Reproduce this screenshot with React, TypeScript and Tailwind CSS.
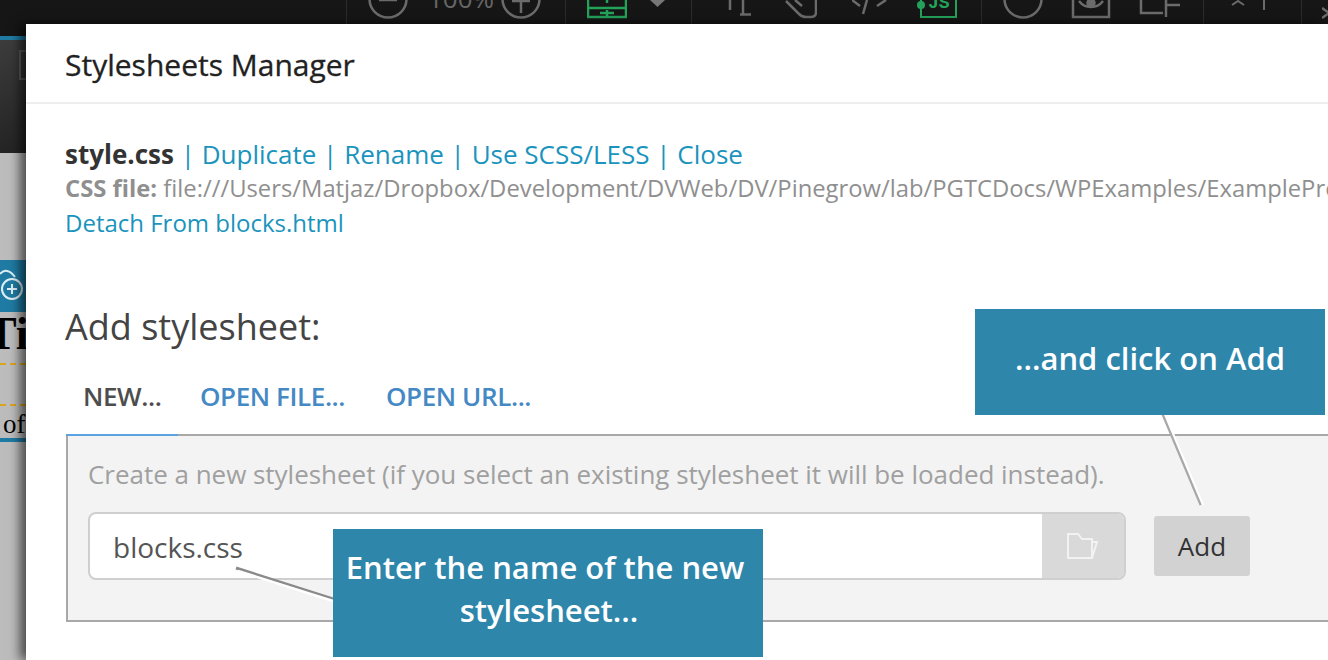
const font = { fontFamily: '"Open Sans", sans-serif' };
const serif = { fontFamily: '"Liberation Serif", serif' };

function ToolIcon({ w, color = '#6b6b6b', className = '', children }: { w: number; color?: string; className?: string; children: React.ReactNode }) {
  return (
    <svg width={w} height={24} viewBox={`0 0 ${w} 24`} fill="none" stroke={color} strokeWidth={2.5} className={`shrink-0 ${className}`}>
      {children}
    </svg>
  );
}

function Toolbar() {
  return (
    <div className="flex h-[24px] shrink-0 overflow-hidden bg-[#161616] pl-[346px]">
      <div className="flex w-[219px] shrink-0 border-l border-[#2c2c2c] pl-[21px]">
        <ToolIcon w={40}>
          <circle cx="20" cy="-1" r="18.5" />
          <path d="M11 0h18" />
        </ToolIcon>
        <span className="ml-[20px] mt-[-19px] w-[64px] shrink-0 text-[26px] leading-[34px] text-[#666666]" style={font}>
          100%
        </span>
        <ToolIcon w={40} className="ml-[9px]">
          <circle cx="20" cy="-1" r="18.5" />
          <path d="M20 -8v21M11 1h18" />
        </ToolIcon>
      </div>
      <div className="flex w-[126px] shrink-0 border-l border-[#2c2c2c] pl-[21px]">
        <ToolIcon w={40} color="#23a35a">
          <path d="M1 0v17h38V0M1 8h38M20 0v3M13 13h14M20 10v6" />
        </ToolIcon>
        <svg width="15" height="24" viewBox="0 0 15 24" className="ml-[23px] shrink-0">
          <path d="M0 0h15l-7.5 7z" fill="#777777" />
        </svg>
      </div>
      <div className="flex w-[290px] shrink-0 border-l border-[#2c2c2c] pl-[35px]">
        <ToolIcon w={26}>
          <path d="M3 0v10M16 0v14M13 14.5h11" />
        </ToolIcon>
        <ToolIcon w={32} className="ml-[32px]">
          <path d="M1 1l13 13q3 3 7 3h5q5 0 5-5V0M10 0l7 6" />
        </ToolIcon>
        <ToolIcon w={36} className="ml-[35px]">
          <path d="M0 0l8 6M11 14l4-14M25 6l9-6" />
        </ToolIcon>
        <div className="relative ml-[32px] h-[18px] w-[37px] shrink-0 border-x-[2.5px] border-b-[2.5px] border-[#23a35a]">
          <span className="absolute left-[-5px] top-[1px] h-[8px] w-[8px] rounded-full bg-[#23a35a]" />
          <span className="absolute left-[6px] top-[-7px] text-[18px] leading-[20px] font-bold text-[#23a35a]" style={{ fontFamily: '"Liberation Mono", monospace' }}>
            JS
          </span>
        </div>
      </div>
      <div className="flex w-[222px] shrink-0 border-l border-[#2c2c2c] pl-[21px]">
        <ToolIcon w={40}>
          <circle cx="20" cy="-1" r="18.5" />
        </ToolIcon>
        <ToolIcon w={40} className="ml-[28px]">
          <path d="M2 0v17h36V0" />
          <path d="M8 1c6 8 18 8 24 0" />
          <circle cx="20" cy="3" r="3.5" fill="#6b6b6b" />
        </ToolIcon>
        <ToolIcon w={42} className="ml-[28px]">
          <path d="M2 0v13h22M27 0v17M28 5h13" />
        </ToolIcon>
      </div>
      <div className="flex w-[98px] shrink-0 border-l border-[#2c2c2c] pl-[27px]">
        <ToolIcon w={15}>
          <path d="M1 5l6-4 6 4" strokeWidth={2} />
        </ToolIcon>
        <ToolIcon w={4} className="ml-[16px]">
          <path d="M2 0v10" strokeWidth={2} />
        </ToolIcon>
      </div>
      <div className="flex w-[27px] shrink-0 border-l border-[#2c2c2c] pl-[20px]">
        <ToolIcon w={8}>
          <path d="M0 8l7 5M0 18l7-5" />
        </ToolIcon>
      </div>
    </div>
  );
}

function LeftStrip() {
  return (
    <div className="flex w-[26px] shrink-0 flex-col overflow-hidden bg-[#bcbcbc]">
      <div className="h-[12px] shrink-0 bg-[#161616]" />
      <div className="h-[4px] shrink-0 bg-[#1f7ba3]" />
      <div className="flex h-[113px] shrink-0 bg-gradient-to-b from-[#3c3c3c] to-[#242424] pl-[19px] pt-[10px]">
        <div className="h-[30px] w-[7px] border-y-2 border-l-2 border-[#5a5a5a]" />
      </div>
      <div className="h-[107px] shrink-0" />
      <div className="flex h-[52px] shrink-0 items-center bg-[#1f7ba3]">
        <svg width="26" height="52" viewBox="0 0 26 52" fill="none" stroke="#dfeef5" strokeWidth="2">
          <path d="M0 14c4-5 10-4 15 3" />
          <circle cx="12" cy="29" r="10" />
          <path d="M7 29h10M12 24v10" />
        </svg>
      </div>
      <div className="h-[51px] shrink-0 overflow-hidden">
        <p className="ml-[-14px] mt-[-6px] text-[46px] leading-[56px] font-bold text-black" style={serif}>
          Ti
        </p>
      </div>
      <div className="h-[41px] shrink-0 border-t-2 border-dashed border-[#d9a520]" />
      <div className="h-[34px] shrink-0 overflow-hidden border-t-2 border-dashed border-[#d9a520]">
        <p className="ml-[3px] mt-[3px] text-[27px] leading-[30px] text-black" style={serif}>
          of
        </p>
      </div>
      <div className="h-[4px] shrink-0 bg-[#1f7ba3]" />
    </div>
  );
}

function Callout({ className, children }: { className: string; children: React.ReactNode }) {
  return (
    <div className={`absolute flex items-center justify-center bg-[#2e86ab] text-center font-semibold text-white ${className}`}>
      {children}
    </div>
  );
}

export default function App() {
  return (
    <div className="flex h-[660px] w-[1328px] flex-col overflow-hidden bg-[#161616]" style={font}>
      <Toolbar />
      <div className="flex min-h-0 flex-1">
        <LeftStrip />
        <div className="relative min-w-0 flex-1 overflow-hidden bg-white shadow-[-6px_0_10px_rgba(0,0,0,0.6)]">
          <div className="flex h-[80px] items-center border-b-2 border-[#eeeeee] pl-[39px] pt-[3px]">
            <h1 className="text-[30px] font-medium text-[#222222] [-webkit-text-stroke:0.3px_#222222]">Stylesheets Manager</h1>
          </div>

          <div className="pl-[39px] pt-[32px]">
            <p className="text-[26px] leading-[36px] whitespace-nowrap text-[#1a94bd]">
              <b className="font-bold text-[#333333]">style.css</b> | Duplicate | Rename | Use SCSS/LESS | Close
            </p>
            <p className="text-[23.8px] leading-[33px] whitespace-nowrap text-[#8f8f8f]">
              <b className="font-bold">CSS file:</b> file:///Users/Matjaz/Dropbox/Development/DVWeb/DV/Pinegrow/lab/PGTCDocs/WPExamples/ExamplePro/style.css
            </p>
            <p className="text-[24px] leading-[35px] text-[#1a94bd]">Detach From blocks.html</p>

            <h2 className="mt-[65px] text-[36px] leading-[44px] text-[#444444]">Add stylesheet:</h2>

            <div className="mt-[10px] flex h-[75px] items-center text-[26px] font-semibold">
              <span className="w-[135px] pl-[18px] tracking-[-0.4px] text-[#4d4d4d]">NEW...</span>
              <span className="w-[186px] tracking-[-0.4px] text-[#4488c4]">OPEN FILE...</span>
              <span className="tracking-[-0.4px] text-[#4488c4]">OPEN URL...</span>
            </div>

            <div className="relative ml-[1px] mr-[-4px] h-[188px] border-2 border-[#a8a8a8] bg-[#f3f3f3] pl-[20px] pt-[23px]">
              <div className="absolute left-[-2px] top-[-2px] h-[2px] w-[112px] bg-[#5aa3e0]" />
              <p className="text-[26px] leading-[30px] tracking-[-0.025px] whitespace-nowrap text-[#a0a0a0]">
                Create a new stylesheet (if you select an existing stylesheet it will be loaded instead).
              </p>
              <div className="mt-[23px] flex items-start">
                <div className="flex h-[68px] w-[1038px] overflow-hidden rounded-[8px] border-2 border-[#cfcfcf] bg-white">
                  <div className="flex flex-1 items-center pl-[23px] pt-[2px] text-[28px] text-[#555555]">blocks.css</div>
                  <div className="flex w-[82px] items-center justify-center bg-[#d9d9d9]">
                    <svg width="32" height="26" viewBox="0 0 32 26" fill="none" stroke="#f2f2f2" strokeWidth="2">
                      <path d="M1 25V1h10l4 5h10v19H1zM25 25l5-16h-5" />
                    </svg>
                  </div>
                </div>
                <div className="ml-[28px] mt-[4px] flex h-[60px] w-[96px] items-center justify-center rounded-[3px] bg-[#d2d2d2] text-[26px] text-[#333333]">
                  Add
                </div>
              </div>
            </div>
          </div>

          <svg className="pointer-events-none absolute left-0 top-0 h-full w-full" fill="none">
            <path d="M210 544L307 575" stroke="#8a8a8a" strokeWidth="3" />
            <path d="M212 547L307 577" stroke="#ffffff" strokeWidth="2.5" />
            <path d="M1136 388L1175 481" stroke="#a8a8a8" strokeWidth="3" />
            <path d="M1138 388L1177 481" stroke="#ffffff" strokeWidth="2" />
          </svg>

          <Callout className="left-[949px] top-[285px] h-[106px] w-[350px] pb-[8px] text-[31px]">...and click on Add</Callout>
          <Callout className="left-[307px] top-[505px] h-[128px] w-[430px] pb-[8px] pl-[4px] pr-[10px] text-[31px] leading-[43px]">
            <span>
              Enter the name of the new
              <br />
              <span className="ml-[8px]">stylesheet...</span>
            </span>
          </Callout>
        </div>
      </div>
    </div>
  );
}
